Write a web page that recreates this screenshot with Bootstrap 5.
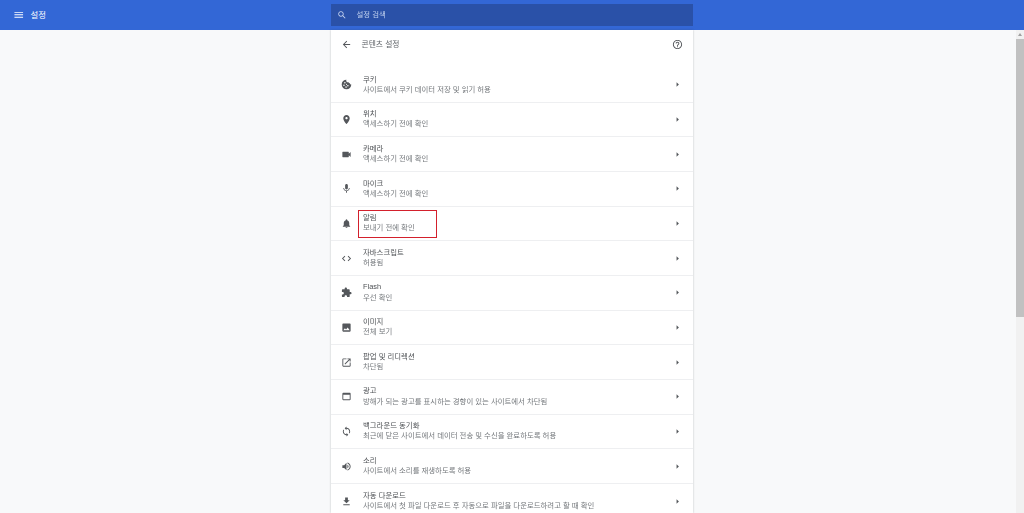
<!DOCTYPE html>
<html lang="ko">
<head>
<meta charset="utf-8">
<title>설정</title>
<link rel="stylesheet" href="https://cdn.jsdelivr.net/npm/bootstrap@5.3.0/dist/css/bootstrap.min.css">
<style>
html,body{height:100%;overflow:hidden}
body{background:#f8f9fa;font-family:"Liberation Sans","Noto Sans CJK KR",sans-serif;font-size:7.4px;line-height:10.3px;color:#4d5054}
.pagewrap{filter:blur(.3px)}
.ico{width:11px;height:11px;fill:#54575b;flex:none}
.topbar{height:30px;background:#3367d6;color:#fff}
.topside{width:331px;padding-left:12.5px;gap:6.5px;font-size:8.4px}
.topside .ico{fill:#fff;width:11.5px;height:11.5px}
.searchbox{width:362px;height:21.5px;background:#2a51a8;color:#bfd0ee;padding-left:6px;gap:9.5px}
.searchbox .ico{fill:#c6d4f0;width:10px;height:10px}
.stage{height:483px}
.panel{width:362px;background:#fff;box-shadow:0 0 2px rgba(60,64,67,.3);overflow:hidden}
.panelhead{height:29px;padding:0 10px;margin-bottom:9px;color:#5f6368}
.backtxt{margin-left:9.5px;padding-top:1px;font-size:7.8px}
.setrow{height:34.67px;padding:0 10px;border-bottom:1px solid #eeeff1;position:relative}
.setrow:last-child{border-bottom:0}
.setrow>.ico:first-child{margin-right:11px}
.setsub{color:#74787c}
.redmark{position:absolute;left:27px;top:3px;width:79px;height:28px;border:1.5px solid #d3202c}
.sbar{position:absolute;right:0;top:30px;bottom:0;width:8px;background:#f1f1f1}
.sthumb{position:absolute;top:9px;left:0;right:0;height:278px;background:#c1c1c1}
.sup{position:absolute;top:3px;left:2px;border-left:2px solid transparent;border-right:2px solid transparent;border-bottom:3px solid #a0a0a0}
</style>
</head>
<body class="position-relative">
<div class="pagewrap">
<header class="topbar d-flex align-items-center">
  <div class="topside d-flex align-items-center"><svg class="ico" viewBox="0 0 24 24"><path d="M3 18h18v-2H3v2zm0-5h18v-2H3v2zm0-7v2h18V6H3z"/></svg><span>설정</span></div>
  <div class="searchbox d-flex align-items-center"><svg class="ico" viewBox="0 0 24 24"><path d="M15.5 14h-.79l-.28-.27C15.41 12.59 16 11.11 16 9.5 16 5.91 13.09 3 9.5 3S3 5.91 3 9.5 5.91 16 9.5 16c1.61 0 3.09-.59 4.23-1.57l.27.28v.79l5 4.99L20.49 19l-4.99-5zm-6 0C7.01 14 5 11.99 5 9.5S7.01 5 9.5 5 14 7.01 14 9.5 11.99 14 9.5 14z"/></svg><span>설정 검색</span></div>
</header>
<main class="stage d-flex justify-content-center">
  <section class="panel">
    <div class="panelhead d-flex align-items-center">
      <svg class="ico" viewBox="0 0 24 24"><path d="M20 11H7.83l5.59-5.59L12 4l-8 8 8 8 1.41-1.41L7.83 13H20v-2z"/></svg>
      <span class="backtxt flex-grow-1">콘텐츠 설정</span>
      <svg class="ico" viewBox="0 0 24 24"><path d="M11 18h2v-2h-2v2zm1-16C6.48 2 2 6.48 2 12s4.48 10 10 10 10-4.48 10-10S17.52 2 12 2zm0 18c-4.41 0-8-3.59-8-8s3.59-8 8-8 8 3.59 8 8-3.59 8-8 8zm0-14c-2.21 0-4 1.79-4 4h2c0-1.1.9-2 2-2s2 .9 2 2c0 2-3 1.75-3 5h2c0-2.25 3-2.5 3-5 0-2.21-1.79-4-4-4z"/></svg>
    </div>
    <div class="setrow d-flex align-items-center"><svg class="ico" viewBox="0 0 24 24"><path fill-rule="evenodd" d="M12 1.5a10.5 10.5 0 1 0 10.5 10.5 2.6 2.6 0 0 1-3-2.6 2.8 2.8 0 0 1-3-3 3.4 3.4 0 0 1-4.5-4.9zM8.5 6.5a1.7 1.7 0 1 1 0 3.4 1.7 1.7 0 0 1 0-3.4zM6.5 12a1.7 1.7 0 1 1 0 3.4 1.7 1.7 0 0 1 0-3.4zM15 13a1.7 1.7 0 1 1 0 3.4 1.7 1.7 0 0 1 0-3.4zM11 16a1.7 1.7 0 1 1 0 3.4 1.7 1.7 0 0 1 0-3.4zM12 10.5a1.2 1.2 0 1 1 0 2.4 1.2 1.2 0 0 1 0-2.4z"/></svg><div class="flex-grow-1"><div>쿠키</div><div class="setsub">사이트에서 쿠키 데이터 저장 및 읽기 허용</div></div><svg class="ico" viewBox="0 0 24 24"><path d="M10 7l5 5-5 5z"/></svg></div>
    <div class="setrow d-flex align-items-center"><svg class="ico" viewBox="0 0 24 24"><path d="M12 2C8.13 2 5 5.13 5 9c0 5.25 7 13 7 13s7-7.75 7-13c0-3.87-3.13-7-7-7zm0 9.5c-1.38 0-2.5-1.12-2.5-2.5s1.12-2.5 2.5-2.5 2.5 1.12 2.5 2.5-1.12 2.5-2.5 2.5z"/></svg><div class="flex-grow-1"><div>위치</div><div class="setsub">액세스하기 전에 확인</div></div><svg class="ico" viewBox="0 0 24 24"><path d="M10 7l5 5-5 5z"/></svg></div>
    <div class="setrow d-flex align-items-center"><svg class="ico" viewBox="0 0 24 24"><path d="M17 10.5V7c0-.55-.45-1-1-1H4c-.55 0-1 .45-1 1v10c0 .55.45 1 1 1h12c.55 0 1-.45 1-1v-3.5l4 4v-11l-4 4z"/></svg><div class="flex-grow-1"><div>카메라</div><div class="setsub">액세스하기 전에 확인</div></div><svg class="ico" viewBox="0 0 24 24"><path d="M10 7l5 5-5 5z"/></svg></div>
    <div class="setrow d-flex align-items-center"><svg class="ico" viewBox="0 0 24 24"><path d="M12 14c1.66 0 2.99-1.34 2.99-3L15 5c0-1.66-1.34-3-3-3S9 3.34 9 5v6c0 1.66 1.34 3 3 3zm5.3-3c0 3-2.54 5.1-5.3 5.1S6.7 14 6.7 11H5c0 3.41 2.72 6.23 6 6.72V21h2v-3.28c3.28-.48 6-3.3 6-6.72h-1.7z"/></svg><div class="flex-grow-1"><div>마이크</div><div class="setsub">액세스하기 전에 확인</div></div><svg class="ico" viewBox="0 0 24 24"><path d="M10 7l5 5-5 5z"/></svg></div>
    <div class="setrow d-flex align-items-center"><svg class="ico" viewBox="0 0 24 24"><path d="M12 22c1.1 0 2-.9 2-2h-4c0 1.1.89 2 2 2zm6-6v-5c0-3.07-1.64-5.64-4.5-6.32V4c0-.83-.67-1.5-1.5-1.5s-1.5.67-1.5 1.5v.68C7.63 5.36 6 7.92 6 11v5l-2 2v1h16v-1l-2-2z"/></svg><div class="flex-grow-1"><div>알림</div><div class="setsub">보내기 전에 확인</div></div><svg class="ico" viewBox="0 0 24 24"><path d="M10 7l5 5-5 5z"/></svg><div class="redmark"></div></div>
    <div class="setrow d-flex align-items-center"><svg class="ico" viewBox="0 0 24 24"><path d="M9.4 16.6L4.8 12l4.6-4.6L8 6l-6 6 6 6 1.4-1.4zm5.2 0l4.6-4.6-4.6-4.6L16 6l6 6-6 6-1.4-1.4z"/></svg><div class="flex-grow-1"><div>자바스크립트</div><div class="setsub">허용됨</div></div><svg class="ico" viewBox="0 0 24 24"><path d="M10 7l5 5-5 5z"/></svg></div>
    <div class="setrow d-flex align-items-center"><svg class="ico" viewBox="0 0 24 24"><path d="M20.5 11H19V7c0-1.1-.9-2-2-2h-4V3.5C13 2.12 11.88 1 10.5 1S8 2.12 8 3.5V5H4c-1.1 0-1.99.9-1.99 2v3.8H3.5c1.49 0 2.7 1.21 2.7 2.7s-1.21 2.7-2.7 2.7H2V20c0 1.1.9 2 2 2h3.8v-1.5c0-1.49 1.21-2.7 2.7-2.7 1.49 0 2.7 1.21 2.7 2.7V22H17c1.1 0 2-.9 2-2v-4h1.5c1.38 0 2.5-1.12 2.5-2.5S21.88 11 20.5 11z"/></svg><div class="flex-grow-1"><div>Flash</div><div class="setsub">우선 확인</div></div><svg class="ico" viewBox="0 0 24 24"><path d="M10 7l5 5-5 5z"/></svg></div>
    <div class="setrow d-flex align-items-center"><svg class="ico" viewBox="0 0 24 24"><path d="M21 19V5c0-1.1-.9-2-2-2H5c-1.1 0-2 .9-2 2v14c0 1.1.9 2 2 2h14c1.1 0 2-.9 2-2zM8.5 13.5l2.5 3.01L14.5 12l4.5 6H5l3.5-4.5z"/></svg><div class="flex-grow-1"><div>이미지</div><div class="setsub">전체 보기</div></div><svg class="ico" viewBox="0 0 24 24"><path d="M10 7l5 5-5 5z"/></svg></div>
    <div class="setrow d-flex align-items-center"><svg class="ico" viewBox="0 0 24 24"><path d="M19 19H5V5h7V3H5c-1.11 0-2 .9-2 2v14c0 1.1.89 2 2 2h14c1.1 0 2-.9 2-2v-7h-2v7zM14 3v2h3.59l-9.83 9.83 1.41 1.41L19 6.41V10h2V3h-7z"/></svg><div class="flex-grow-1"><div>팝업 및 리디렉션</div><div class="setsub">차단됨</div></div><svg class="ico" viewBox="0 0 24 24"><path d="M10 7l5 5-5 5z"/></svg></div>
    <div class="setrow d-flex align-items-center"><svg class="ico" viewBox="0 0 24 24"><path d="M19 4H5c-1.11 0-2 .9-2 2v12c0 1.1.89 2 2 2h14c1.1 0 2-.9 2-2V6c0-1.1-.89-2-2-2zm0 14H5V8h14v10z"/></svg><div class="flex-grow-1"><div>광고</div><div class="setsub">방해가 되는 광고를 표시하는 경향이 있는 사이트에서 차단됨</div></div><svg class="ico" viewBox="0 0 24 24"><path d="M10 7l5 5-5 5z"/></svg></div>
    <div class="setrow d-flex align-items-center"><svg class="ico" viewBox="0 0 24 24"><path d="M12 4V1L8 5l4 4V6c3.31 0 6 2.69 6 6 0 1.01-.25 1.97-.7 2.8l1.46 1.46C19.54 15.03 20 13.57 20 12c0-4.42-3.58-8-8-8zm0 14c-3.31 0-6-2.69-6-6 0-1.01.25-1.97.7-2.8L5.24 7.74C4.46 8.97 4 10.43 4 12c0 4.42 3.58 8 8 8v3l4-4-4-4v3z"/></svg><div class="flex-grow-1"><div>백그라운드 동기화</div><div class="setsub">최근에 닫은 사이트에서 데이터 전송 및 수신을 완료하도록 허용</div></div><svg class="ico" viewBox="0 0 24 24"><path d="M10 7l5 5-5 5z"/></svg></div>
    <div class="setrow d-flex align-items-center"><svg class="ico" viewBox="0 0 24 24"><path d="M3 9v6h4l5 5V4L7 9H3zm13.5 3c0-1.77-1.02-3.29-2.5-4.03v8.05c1.48-.73 2.5-2.25 2.5-4.02zM14 3.23v2.06c2.89.86 5 3.54 5 6.71s-2.11 5.85-5 6.71v2.06c4.01-.91 7-4.49 7-8.77s-2.99-7.86-7-8.77z"/></svg><div class="flex-grow-1"><div>소리</div><div class="setsub">사이트에서 소리를 재생하도록 허용</div></div><svg class="ico" viewBox="0 0 24 24"><path d="M10 7l5 5-5 5z"/></svg></div>
    <div class="setrow d-flex align-items-center"><svg class="ico" viewBox="0 0 24 24"><path d="M19 9h-4V3H9v6H5l7 7 7-7zM5 18v2h14v-2H5z"/></svg><div class="flex-grow-1"><div>자동 다운로드</div><div class="setsub">사이트에서 첫 파일 다운로드 후 자동으로 파일을 다운로드하려고 할 때 확인</div></div><svg class="ico" viewBox="0 0 24 24"><path d="M10 7l5 5-5 5z"/></svg></div>
  </section>
</main>
</div>
<aside class="sbar"><span class="sup"></span><div class="sthumb"></div></aside>
</body>
</html>
